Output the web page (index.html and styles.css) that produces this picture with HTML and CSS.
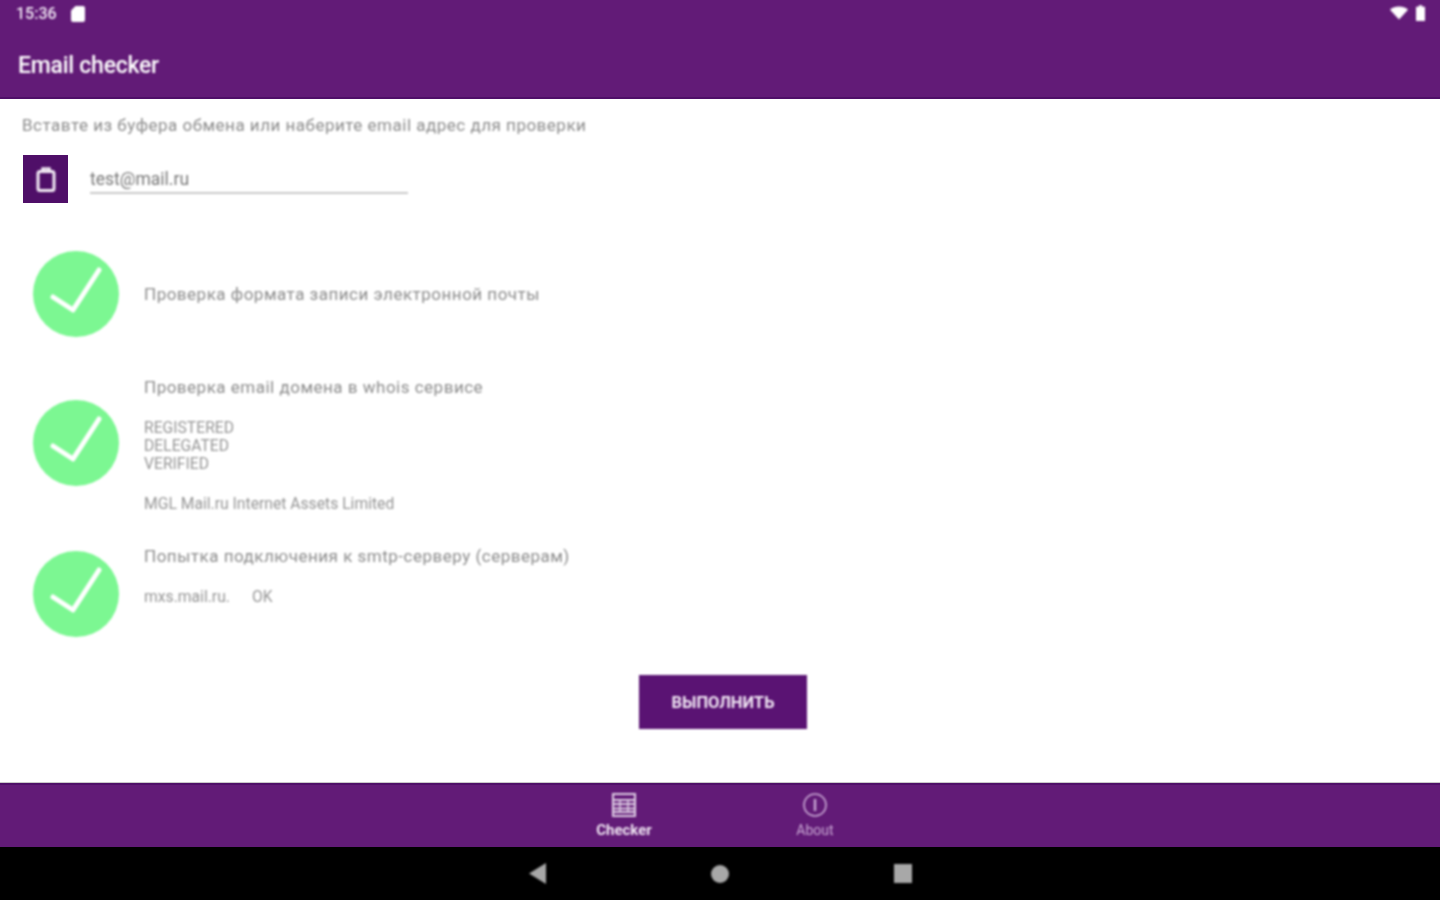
FILE: index.html
```html
<!DOCTYPE html>
<html lang="ru">
<head>
<meta charset="utf-8">
<title>Email checker</title>
<link rel="stylesheet" href="styles.css">
</head>
<body>
<div class="screen">
  <header class="appbar">
    <div class="status">
      <div class="status-left">
        <span class="clock">15:36</span>
        <svg class="sd" viewBox="0 0 14 16"><path d="M4.500 0H12a2 2 0 0 1 2 2v12a2 2 0 0 1-2 2H2a2 2 0 0 1-2-2V4.500z" fill="#fff"/></svg>
      </div>
      <div class="status-right">
        <svg class="wifi" viewBox="0 0 18 13"><path d="M0 3.200C2.400 1.200 5.500 0 9 0s6.600 1.200 9 3.200L9 13z" fill="#fff"/></svg>
        <svg class="battery" viewBox="0 0 8 14"><path d="M2.500 0h3v1.500H8V14H0V1.500h2.500z" fill="#fff"/></svg>
      </div>
    </div>
    <h1 class="title">Email checker</h1>
  </header>

  <main class="content">
    <p class="hint">Вставте из буфера обмена или наберите email адрес для проверки</p>
    <div class="input-row">
      <button class="paste" aria-label="Вставить">
        <svg viewBox="0 0 20 26" class="paste-icon"><path d="M6.500 5V2.500h7V5" fill="none" stroke="#f3edf5" stroke-width="2.500"/><rect x="2" y="5.500" width="16" height="19" rx="2" fill="none" stroke="#f3edf5" stroke-width="3"/></svg>
      </button>
      <div class="field">test@mail.ru</div>
    </div>

    <section class="check check-format">
      <svg class="ok" viewBox="0 0 86 86"><circle cx="43" cy="43" r="43" fill="#7cf792"/><path d="M20 46l20 13L66 19" fill="none" stroke="#fff" stroke-width="5" stroke-linecap="round" stroke-linejoin="round"/></svg>
      <div class="check-text"><p class="check-title">Проверка формата записи электронной почты</p></div>
    </section>

    <section class="check check-whois">
      <svg class="ok" viewBox="0 0 86 86"><circle cx="43" cy="43" r="43" fill="#7cf792"/><path d="M20 46l20 13L66 19" fill="none" stroke="#fff" stroke-width="5" stroke-linecap="round" stroke-linejoin="round"/></svg>
      <div class="check-text">
        <p class="check-title">Проверка email домена в whois сервисе</p>
        <p class="detail detail-status">REGISTERED<br>DELEGATED<br>VERIFIED</p>
        <p class="detail detail-org">MGL Mail.ru Internet Assets Limited</p>
      </div>
    </section>

    <section class="check check-smtp">
      <svg class="ok" viewBox="0 0 86 86"><circle cx="43" cy="43" r="43" fill="#7cf792"/><path d="M20 46l20 13L66 19" fill="none" stroke="#fff" stroke-width="5" stroke-linecap="round" stroke-linejoin="round"/></svg>
      <div class="check-text">
        <p class="check-title">Попытка подключения к smtp-серверу (серверам)</p>
        <p class="detail detail-mx"><span>mxs.mail.ru.</span><span>OK</span></p>
      </div>
    </section>

    <div class="action"><button class="run">ВЫПОЛНИТЬ</button></div>
  </main>

  <nav class="tabs">
    <div class="tab tab-active">
      <svg class="tab-icon" viewBox="0 0 24 24"><rect x="1" y="1" width="22" height="22" fill="none" stroke="#e0cfe6" stroke-width="2"/><path d="M1 7h22M1 11h22M1 15.500h22M1 19h22" stroke="#e0cfe6" stroke-width="2"/><path d="M8 7v12M16 7v12" stroke="#e0cfe6" stroke-width="1.500"/></svg>
      <span>Checker</span>
    </div>
    <div class="tab">
      <svg class="tab-icon" viewBox="0 0 24 24"><circle cx="12" cy="12" r="11" fill="none" stroke="#c9a8d4" stroke-width="1.600"/><path d="M12 6v12" stroke="#c9a8d4" stroke-width="2.400"/></svg>
      <span>About</span>
    </div>
  </nav>

  <footer class="sysnav">
    <svg class="back" viewBox="0 0 17 21"><path d="M0 10.500L17 0v21z" fill="#a8a8a8"/></svg>
    <span class="home"></span>
    <span class="recents"></span>
  </footer>
</div>
</body>
</html>
```

FILE: styles.css
```css
* { box-sizing: border-box; }
html, body { margin: 0; padding: 0; }
body { width: 1440px; height: 900px; overflow: hidden; background: #fff; font-family: Roboto, "Noto Sans", sans-serif; }
p, h1 { margin: 0; font-weight: 400; }
button { border: 0; padding: 0; font-family: inherit; }

.screen { width: 1440px; height: 900px; display: flex; flex-direction: column; }

.appbar { height: 99px; flex: none; background: #621b77; border-bottom: 2px solid #4f0f68; color: #fff; display: flex; flex-direction: column; }
.status { height: 28px; padding: 5px 15px 0 16px; display: flex; justify-content: space-between; align-items: flex-start; }
.status-left, .status-right { display: flex; align-items: center; }
.clock { font-size: 16px; line-height: 18px; font-weight: 500; color: #f2e9f5; filter: blur(.8px); }
.sd { width: 14px; height: 16px; margin-left: 14px; filter: blur(.8px); }
.wifi { width: 18px; height: 14px; filter: blur(.8px); }
.battery { width: 9px; height: 16px; margin-left: 8px; filter: blur(.8px); }
.title { margin: 25px 0 0 18px; font-size: 23px; line-height: 26px; font-weight: 500; letter-spacing: -.25px; filter: blur(.8px); }

.content { flex: 1; min-height: 0; padding: 16px 0 0 22px; display: flex; flex-direction: column; color: #8b8b8b; }
.hint { font-size: 17px; line-height: 21px; letter-spacing: .5px; filter: blur(.8px); }

.input-row { display: flex; margin-top: 19px; padding-left: 1px; height: 48px; }
.paste { width: 45px; height: 48px; background: #4f0f68; display: flex; align-items: center; justify-content: center; }
.paste-icon { width: 20px; height: 26px; filter: blur(.8px); }
.field { width: 318px; height: 39px; margin-left: 22px; border-bottom: 2px solid #c9c9c9; font-size: 17.500px; line-height: 48px; color: #777; filter: blur(.8px); }

.check { display: flex; align-items: center; padding-left: 11px; }
.ok { width: 86px; height: 86px; flex: none; filter: blur(.8px); }
.check-text { margin-left: 25px; filter: blur(.8px); }
.check-title { font-size: 17px; line-height: 22px; letter-spacing: .5px; }
.check-format { margin-top: 48px; }
.check-whois { margin-top: 39px; }
.check-whois .ok { margin-bottom: 3px; }
.check-smtp { margin-top: 32px; align-items: flex-start; }
.check-smtp .ok { margin-top: 6px; }
.detail { font-size: 15.700px; line-height: 18px; color: #959595; }
.detail-status { margin-top: 21px; }
.detail-org { margin-top: 22px; }
.detail-mx { margin-top: 21px; display: flex; gap: 22px; }

.action { display: flex; justify-content: center; margin-top: 38px; padding-right: 16px; }
.run { width: 168px; height: 54px; background: #5a1373; color: #f0e6f3; font-size: 16.500px; font-weight: 700; filter: blur(.8px); }

.tabs { height: 64px; flex: none; background: #621b77; border-top: 2px solid #4f0f68; box-shadow: 0 -1px 0 #c8c8c8; display: flex; justify-content: center; padding-right: 1px; }
.tab { width: 191px; display: flex; flex-direction: column; align-items: center; padding-top: 8px; color: #c9a8d4; font-size: 14px; line-height: 16px; }
.tab span { margin-top: 5px; filter: blur(.8px); }
.tab-active { color: #f0e6f3; font-size: 15px; font-weight: 700; }
.tab-icon { width: 24px; height: 24px; filter: blur(.8px); }

.sysnav { height: 53px; flex: none; background: #000; display: flex; align-items: center; justify-content: center; gap: 165px; }
.back { width: 17px; height: 21px; filter: blur(.8px); }
.home { width: 18px; height: 18px; border-radius: 50%; background: #a8a8a8; filter: blur(.8px); }
.recents { width: 18px; height: 19px; background: #a8a8a8; filter: blur(.8px); }
```
